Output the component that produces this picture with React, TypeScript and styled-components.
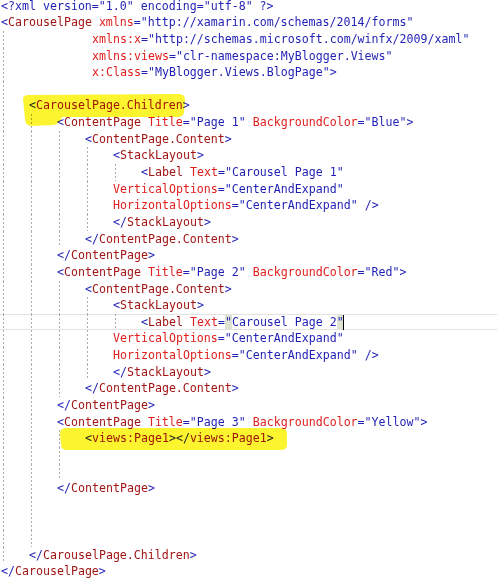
import React from 'react';
import styled, { createGlobalStyle } from 'styled-components';

const Global = createGlobalStyle`
  html, body {
    margin: 0;
    padding: 0;
    background: #ffffff;
  }
  body {
    overflow: hidden;
  }
`

const LINE_H = 16.65
const CHAR_W = 7

const Page = styled.div`
  position: relative;
  width: 497px;
  height: 583px;
  overflow: hidden;
  background: #fff;
`
const Code = styled.div`
  margin-top: -2.4px;
  padding-left: 1px;
  font-family: "DejaVu Sans Mono", "Liberation Mono", monospace;
  font-size: 11.627px;
  color: #1f1fb4;
`
const Line = styled.div<{ $current?: boolean }>`
  display: flex;
  align-items: stretch;
  height: ${LINE_H}px;
  line-height: ${LINE_H}px;
  white-space: pre;
  box-shadow: ${p => p.$current ? 'inset 0 1px 0 #e2e2e2, inset 0 -1px 0 #e2e2e2' : 'none'};
  margin-left: ${p => p.$current ? '-1px' : '0'};
  padding-left: ${p => p.$current ? '1px' : '0'};
`
const Indent = styled.span<{ $guide: boolean }>`
  flex: none;
  width: ${CHAR_W * 4}px;
  background-image: ${p => p.$guide
    ? 'repeating-linear-gradient(to bottom, #ababab 0 2px, transparent 2px 4px)'
    : 'none'};
  background-size: 1px 100%;
  background-position: 2px 0;
  background-repeat: no-repeat;
`
const Text = styled.span``
const Tok = styled.span<{ $kind: string }>`
  color: ${p => ({
    delim: '#1f1fb4',
    elem: '#a31515',
    attr: '#e0201f',
    val: '#1f1fb4',
    pi: '#1f1fb4',
    ws: 'inherit',
  } as Record<string, string>)[p.$kind]};
`
const MatchQuote = styled.span`
  background: #dde2d2;
`
const Caret = styled.span`
  display: inline-block;
  width: 1px;
  height: 15px;
  margin-left: -1px;
  background: #000;
  vertical-align: middle;
`
const Marker = styled.svg`
  position: absolute;
  left: 0;
  top: 0;
  pointer-events: none;
  mix-blend-mode: multiply;
`

const source = [
  '<?xml version="1.0" encoding="utf-8" ?>',
  '<CarouselPage xmlns="http://xamarin.com/schemas/2014/forms"',
  '             xmlns:x="http://schemas.microsoft.com/winfx/2009/xaml"',
  '             xmlns:views="clr-namespace:MyBlogger.Views"',
  '             x:Class="MyBlogger.Views.BlogPage">',
  '',
  '    <CarouselPage.Children>',
  '        <ContentPage Title="Page 1" BackgroundColor="Blue">',
  '            <ContentPage.Content>',
  '                <StackLayout>',
  '                    <Label Text="Carousel Page 1"',
  '                VerticalOptions="CenterAndExpand"',
  '                HorizontalOptions="CenterAndExpand" />',
  '                </StackLayout>',
  '            </ContentPage.Content>',
  '        </ContentPage>',
  '        <ContentPage Title="Page 2" BackgroundColor="Red">',
  '            <ContentPage.Content>',
  '                <StackLayout>',
  '                    <Label Text="Carousel Page 2"',
  '                VerticalOptions="CenterAndExpand"',
  '                HorizontalOptions="CenterAndExpand" />',
  '                </StackLayout>',
  '            </ContentPage.Content>',
  '        </ContentPage>',
  '        <ContentPage Title="Page 3" BackgroundColor="Yellow">',
  '            <views:Page1></views:Page1>',
  '',
  '',
  '        </ContentPage>',
  '',
  '',
  '',
  '    </CarouselPage.Children>',
  '</CarouselPage>',
]

// indent guides: column, first line, last line (1-based)
const blocks = [
  { col: 0, from: 3, to: 34 },
  { col: 4, from: 8, to: 33 },
  { col: 8, from: 9, to: 15 },
  { col: 12, from: 10, to: 14 },
  { col: 16, from: 11, to: 13 },
  { col: 8, from: 18, to: 24 },
  { col: 12, from: 19, to: 23 },
  { col: 16, from: 20, to: 22 },
  { col: 8, from: 27, to: 29 },
]

const CURRENT = 20

type Token = { t: string; k: string }

function tokenize(s: string): Token[] {
  if (s.startsWith('<?')) return [{ t: s, k: 'pi' }]
  const re = /(<\/|<|\/>|>)|("[^"]*")|(=)|([^\s<>="\/]+)|(\s+)/g
  const out: Token[] = []
  let afterOpen = false
  let m: RegExpExecArray | null
  while ((m = re.exec(s))) {
    if (m[1]) {
      out.push({ t: m[1], k: 'delim' })
      afterOpen = m[1] === '<' || m[1] === '</'
    } else if (m[2]) {
      out.push({ t: m[2], k: 'val' })
    } else if (m[3]) {
      out.push({ t: m[3], k: 'delim' })
    } else if (m[4]) {
      out.push({ t: m[4], k: afterOpen ? 'elem' : 'attr' })
      afterOpen = false
    } else {
      out.push({ t: m[5], k: 'ws' })
    }
  }
  return out
}

function CodeLine({ text, no }: { text: string; no: number }) {
  const body = text.trimStart()
  const indent = text.length - body.length
  const guides = blocks
    .filter(b => no >= b.from && no <= b.to)
    .map(b => b.col)
    .filter(c => body === '' || c < indent)
  const cells = body === ''
    ? (guides.length ? Math.max(...guides) / 4 + 1 : 0)
    : Math.floor(indent / 4)
  const rest = body === '' ? '' : ' '.repeat(indent - cells * 4)
  const isCur = no === CURRENT

  return (
    <Line $current={isCur}>
      {Array.from({ length: cells }, (_, i) => (
        <Indent key={i} $guide={guides.includes(i * 4)} />
      ))}
      <Text>
        {rest}
        {tokenize(body).map((tk, i) =>
          isCur && tk.k === 'val' ? (
            <Tok key={i} $kind="val">
              <MatchQuote>"</MatchQuote>
              {tk.t.slice(1, -1)}
              <MatchQuote>"</MatchQuote>
            </Tok>
          ) : (
            <Tok key={i} $kind={tk.k}>{tk.t}</Tok>
          )
        )}
        {isCur && <Caret />}
      </Text>
    </Line>
  )
}

function Highlighter() {
  return (
    <Marker width="497" height="583" viewBox="0 0 497 583">
      <path
        fill="#fbf42e"
        d="M23,99 Q23,95 29,95 L179,94 Q185,94 185,100 L184,112 Q184,117 177,117 L62,117 Q60,123 54,125 L31,126 Q25,125 25,119 Z"
      />
      <path
        fill="#fbf42e"
        d="M60,433 Q60,428 67,428 L281,428 Q287,428 287,434 L287,445 Q287,450 280,450 L67,450 Q61,450 61,444 Z"
      />
    </Marker>
  )
}

export default function App() {
  return (
    <Page>
      <Global />
      <Code>
        {source.map((l, i) => (
          <CodeLine key={i} text={l} no={i + 1} />
        ))}
      </Code>
      <Highlighter />
    </Page>
  )
}
